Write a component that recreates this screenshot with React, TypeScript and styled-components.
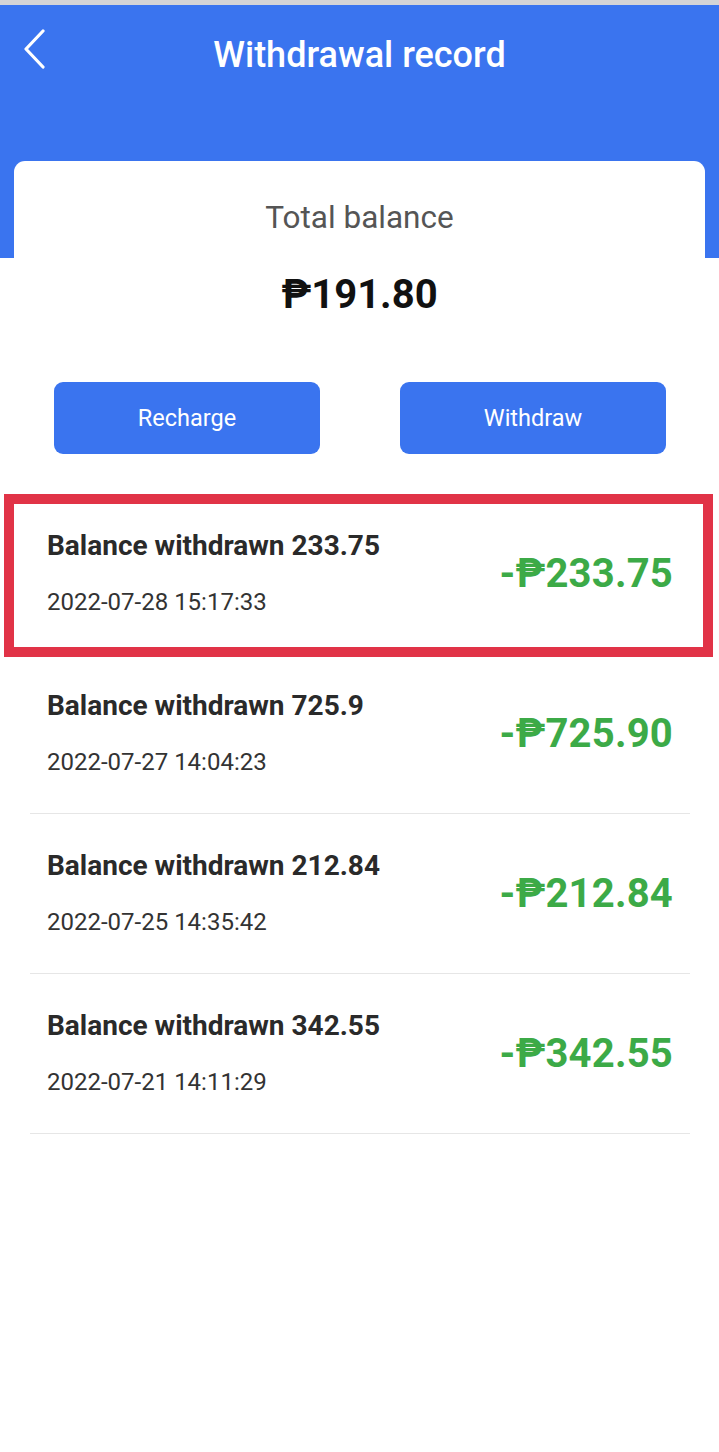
import React from "react";
import styled, { createGlobalStyle } from "styled-components";

const GlobalStyle = createGlobalStyle`
  html, body { margin: 0; padding: 0; background: #ffffff; }
  body { font-family: Roboto, "Noto Sans", "DejaVu Sans", sans-serif; }
  * { box-sizing: border-box; }
`;

const Page = styled.div`
  width: 719px;
  min-height: 1452px;
  background: #ffffff;
  display: flex;
  flex-direction: column;
`;

const StatusStrip = styled.div`
  height: 5px;
  background: #d4d4d6;
`;

const Header = styled.header`
  background: #3a74ef;
  height: 253px;
  display: flex;
  flex-direction: column;
  padding: 0 14px;
`;

const NavBar = styled.div`
  height: 98px;
  display: grid;
  grid-template-columns: 60px 1fr 60px;
  align-items: center;
  padding-bottom: 2px;
`;

const BackButton = styled.button`
  background: none;
  border: none;
  padding: 0 0 0 8px;
  display: flex;
  align-items: center;
  cursor: pointer;
  height: 40px;
  margin-top: -8px;
`;

const Title = styled.h1`
  margin: 0;
  text-align: center;
  color: #ffffff;
  font-size: 36px;
  font-weight: 500;
  margin-top: 3px;
`;

const Body = styled.div`
  margin-top: -97px;
  display: flex;
  flex-direction: column;
`;

const Card = styled.section`
  margin: 0 14px;
  background: #ffffff;
  border-radius: 11px 11px 0 0;
  display: flex;
  flex-direction: column;
  align-items: center;
  padding-top: 38px;
`;

const BalanceLabel = styled.div`
  font-size: 31.5px;
  color: #555555;
  line-height: 38px;
`;

const BalanceValue = styled.div`
  margin-top: 35px;
  font-size: 40px;
  font-weight: 700;
  color: #111111;
  line-height: 46px;
`;

const ButtonRow = styled.div`
  display: flex;
  justify-content: space-between;
  padding: 0 53px 0 54px;
  margin-top: 64px;
`;

const ActionButton = styled.button`
  width: 266px;
  height: 72px;
  border: none;
  border-radius: 9px;
  background: #3a74ef;
  color: #ffffff;
  font-family: Roboto, "Noto Sans", sans-serif;
  font-size: 23.5px;
  cursor: pointer;
`;

const List = styled.ul`
  list-style: none;
  margin: 40px 0 0 0;
  padding: 0 29px 0 30px;
`;

const Row = styled.li`
  position: relative;
  height: 160px;
  border-bottom: 1px solid #e6e6e6;
  display: flex;
  align-items: center;
  justify-content: space-between;
  padding: 0 17px;
`;

const Highlight = styled.div`
  position: absolute;
  left: -26px;
  right: -23px;
  top: 0;
  bottom: -4px;
  border: 10px solid #e13347;
  pointer-events: none;
`;

const RowText = styled.div`
  display: flex;
  flex-direction: column;
  gap: 22px;
`;

const RowTitle = styled.div`
  font-size: 28px;
  font-weight: 700;
  color: #2a2a2a;
  line-height: 34px;
`;

const RowDate = styled.div`
  font-size: 24px;
  color: #333333;
  line-height: 34px;
`;

const Amount = styled.div`
  font-size: 40px;
  font-weight: 700;
  color: #3caa47;
  letter-spacing: 0.2px;
`;

const records = [
  { title: "Balance withdrawn 233.75", date: "2022-07-28 15:17:33", amount: "-₱233.75" },
  { title: "Balance withdrawn 725.9", date: "2022-07-27 14:04:23", amount: "-₱725.90" },
  { title: "Balance withdrawn 212.84", date: "2022-07-25 14:35:42", amount: "-₱212.84" },
  { title: "Balance withdrawn 342.55", date: "2022-07-21 14:11:29", amount: "-₱342.55" },
];

export default function App() {
  return (
    <Page>
      <GlobalStyle />
      <StatusStrip />
      <Header>
        <NavBar>
          <BackButton aria-label="Back">
            <svg width="24" height="40" viewBox="0 0 24 40" fill="none">
              <path d="M21 2 L4 20 L21 38" stroke="#ffffff" strokeWidth="3.2" strokeLinecap="round" strokeLinejoin="round" />
            </svg>
          </BackButton>
          <Title>Withdrawal record</Title>
          <div />
        </NavBar>
      </Header>
      <Body>
        <Card>
          <BalanceLabel>Total balance</BalanceLabel>
          <BalanceValue>₱191.80</BalanceValue>
        </Card>
        <ButtonRow>
          <ActionButton>Recharge</ActionButton>
          <ActionButton>Withdraw</ActionButton>
        </ButtonRow>
        <List>
          {records.map((r, i) => (
            <Row key={r.date}>
              <RowText>
                <RowTitle>{r.title}</RowTitle>
                <RowDate>{r.date}</RowDate>
              </RowText>
              <Amount>{r.amount}</Amount>
              {i === 0 && <Highlight />}
            </Row>
          ))}
        </List>
      </Body>
    </Page>
  );
}
